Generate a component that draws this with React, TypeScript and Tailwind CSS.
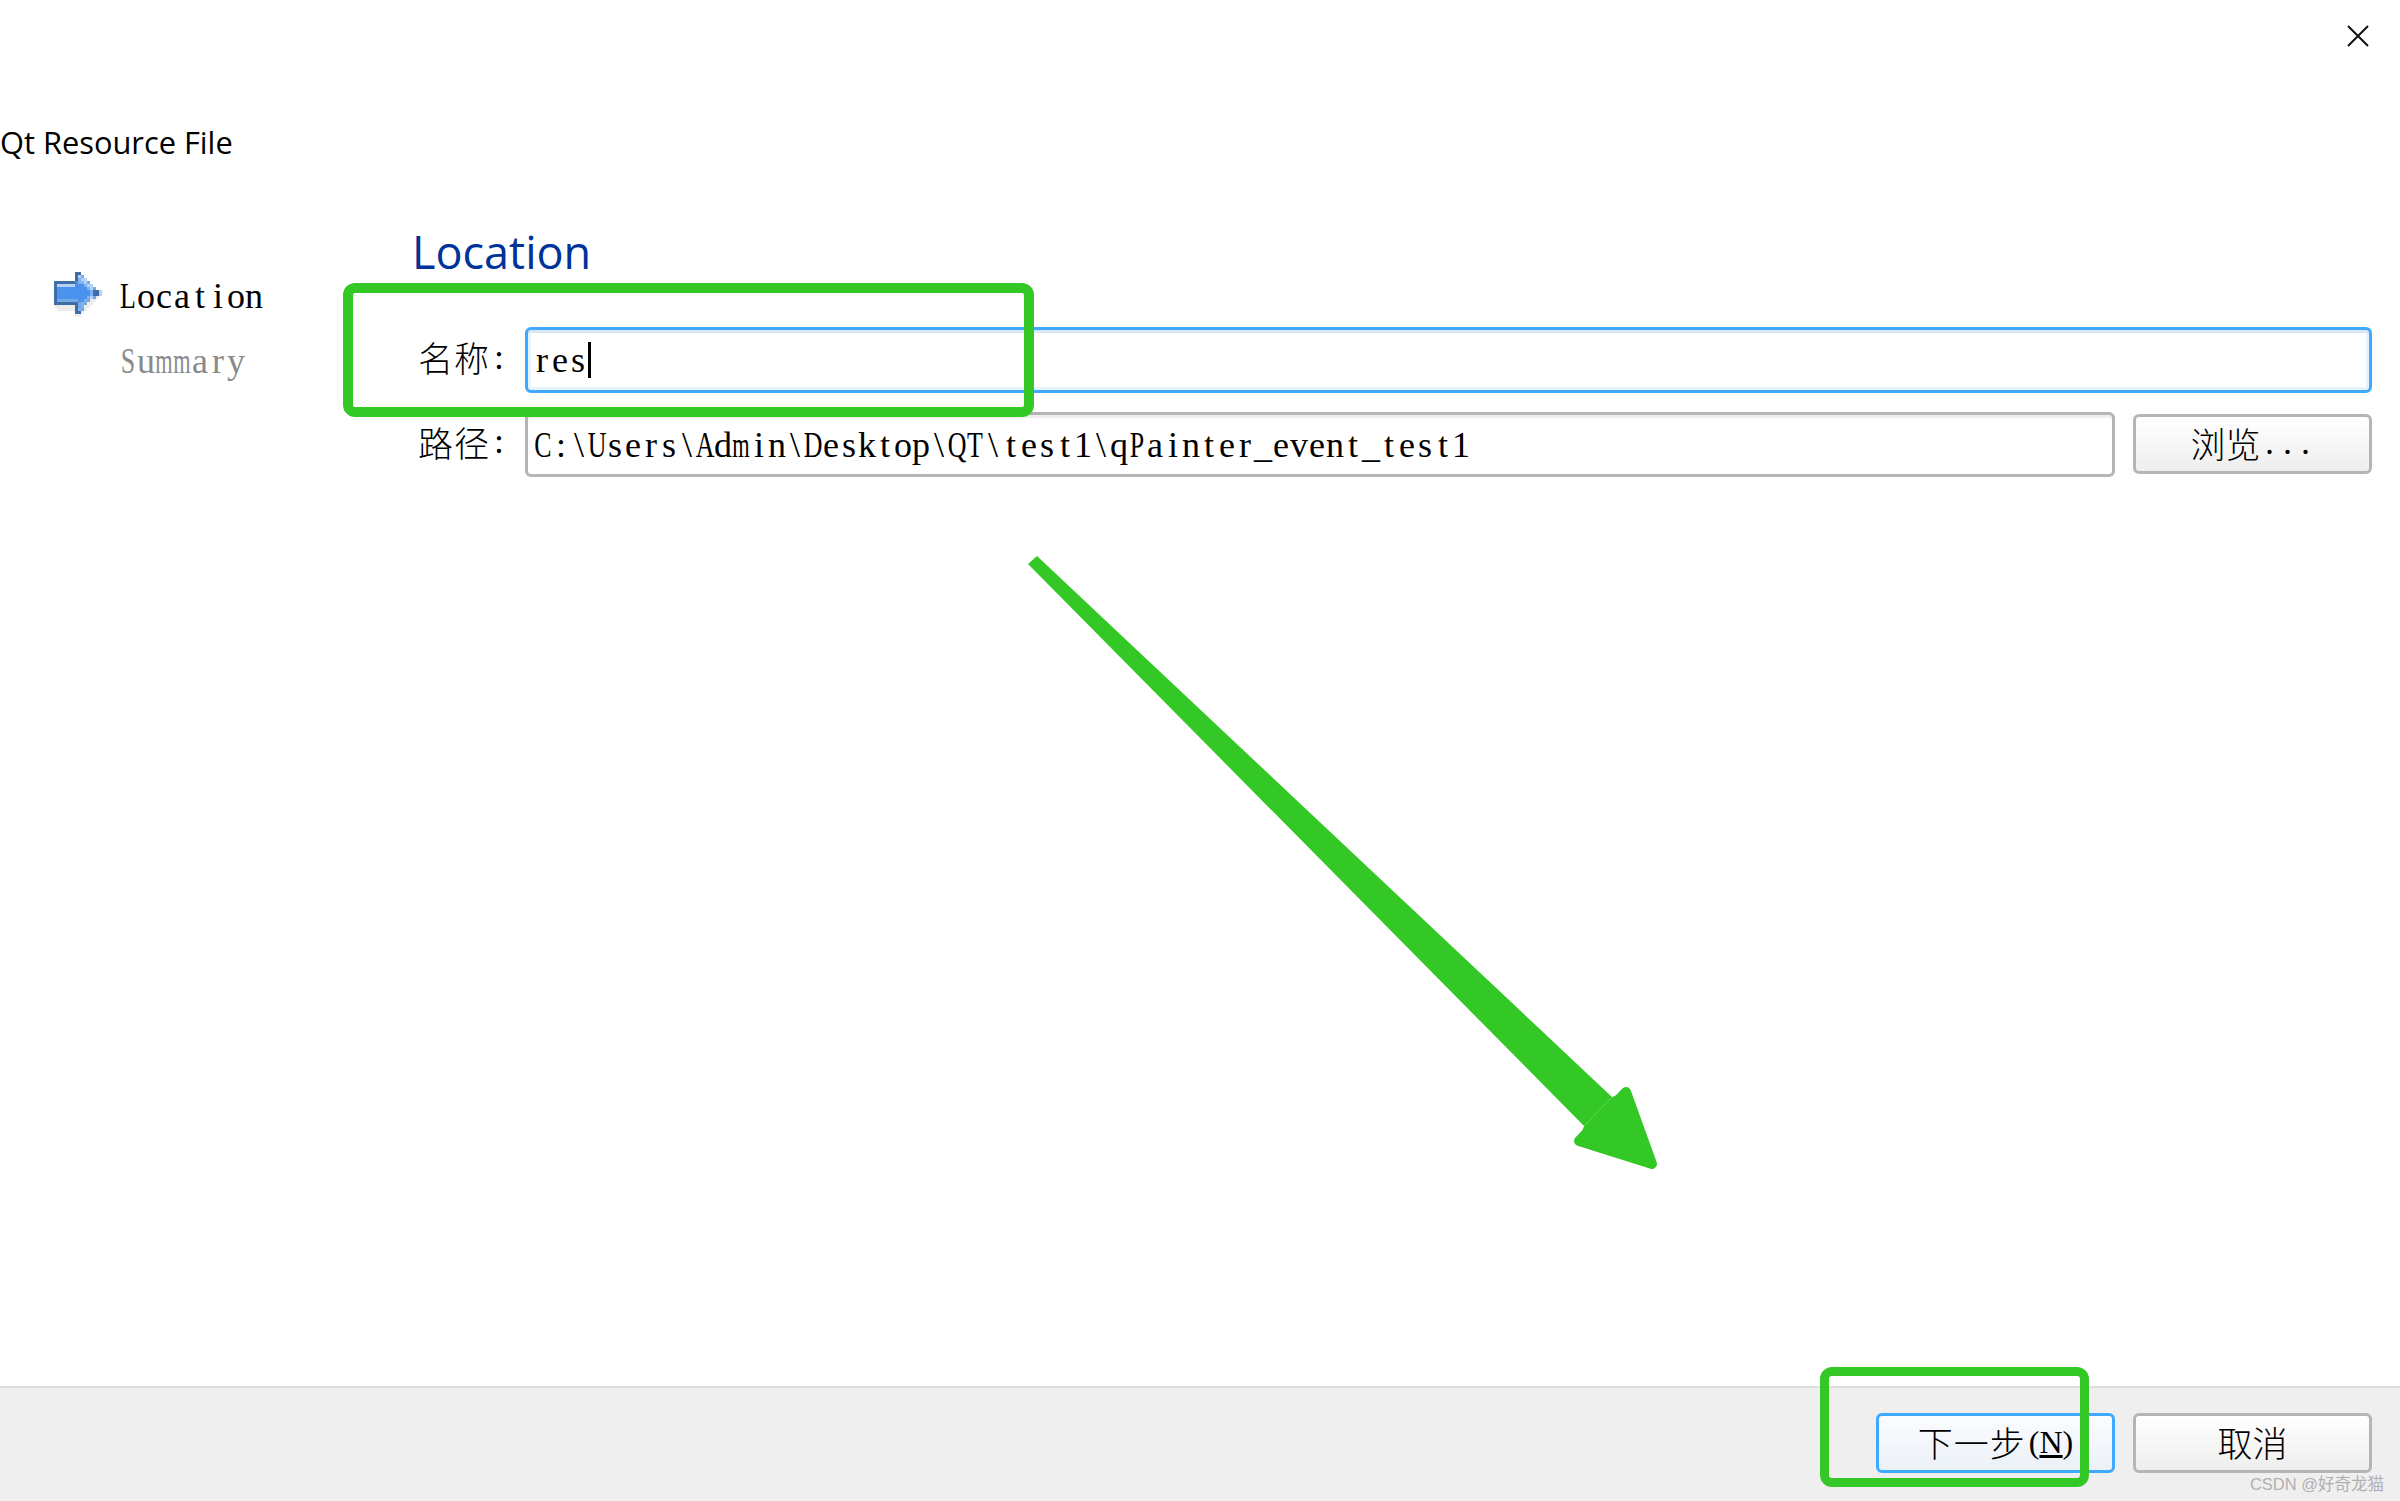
import { FC, ReactNode } from 'react';

const serifFont = "font-['Liberation_Serif',serif]";
const cjkFont = "font-['Noto_Sans_CJK_SC','Liberation_Serif',serif] font-light";

// 16x16 icon, one cell = 3px
const arrowPixels = [
  '.......dd.......',
  '.......dlm......',
  '.......dsll.....',
  'dddddddasslm....',
  'dllllllbbbsll...',
  'dbbbbbbbbbbslm..',
  'dbbbbbbbbbbbsddl',
  'dbbbbbbbbbbbsddl',
  'dbbbbbbbbbbslmg.',
  'dmmmmmmmbbsmgg..',
  'ddddddddmsmgg...',
  'gggggggdmsgg....',
  '.ggggggdsmg.....',
  '.......ddg......',
  '.......gg.......',
  '................',
];

const pixelColors: Record<string, string> = {
  d: '#3f6ea5',
  a: '#5c87b8',
  l: '#b4d2f5',
  s: '#7fb2f0',
  m: '#76a8e4',
  b: '#4a92ee',
  g: '#ececec',
};

const StepArrow: FC = () => (
  <svg width="48" height="48" viewBox="0 0 16 16" shapeRendering="crispEdges" className="shrink-0">
    {arrowPixels.map((row, y) =>
      row.split('').map((c, x) =>
        c === '.' ? null : <rect key={`${x}-${y}`} x={x} y={y} width="1" height="1" fill={pixelColors[c]} />,
      ),
    )}
  </svg>
);

// the dialog font is a half-width serif, so each letter sits in an 18px cell
const cellClass = (c: string) => {
  if ('mwMW'.includes(c)) return 'scale-x-[0.62]';
  if ('ADQUCLSPTN'.includes(c)) return 'scale-x-[0.72]';
  return '';
};

const HalfWidth: FC<{ text: string; className?: string }> = ({ text, className = '' }) => (
  <span className={`${serifFont} inline-flex text-[36px] leading-none ${className}`}>
    {text.split('').map((c, i) => (
      <span key={i} className={`flex w-[18px] justify-center ${cellClass(c)}`}>
        {c}
      </span>
    ))}
  </span>
);

const FieldLabel: FC<{ text: string }> = ({ text }) => (
  <div className="ml-[6px] flex w-[107px] items-center pb-[7px] text-black">
    <span className={`${cjkFont} text-[35px] leading-none tracking-[1px]`}>{text}</span>
    <HalfWidth text=":" />
  </div>
);

const DialogButton: FC<{ children: ReactNode; focused?: boolean }> = ({ children, focused }) => (
  <button
    className={`flex h-[60px] w-[239px] items-center justify-center rounded-[6px] border-[3px] bg-gradient-to-b pb-[3px] text-black ${
      focused ? 'border-[#3fa9ff] from-[#fbfcfe] to-[#ebf1f8]' : 'border-[#b5b5b5] from-[#ffffff] to-[#eeeeee]'
    }`}
  >
    {children}
  </button>
);

const App: FC = () => {
  return (
    <div className="relative flex h-[1501px] w-[2400px] flex-col overflow-hidden bg-white">
      <header className="flex h-[116px] justify-end pr-[31px] pt-[25px]">
        <svg width="22" height="22" viewBox="0 0 22 22" fill="none" stroke="#111" strokeWidth="2">
          <path d="M1 1l20 20M21 1L1 21" />
        </svg>
      </header>
      <h1 className="font-['Open_Sans','Noto_Sans',sans-serif] text-[30.8px] leading-[52px] text-black">Qt Resource File</h1>

      <main className="flex flex-1">
        <nav className="flex w-[412px] shrink-0 flex-col pl-[54px] pt-[104px]">
          <div className="flex h-[48px] items-center gap-[17px]">
            <StepArrow />
            <HalfWidth text="Location" className="text-black" />
          </div>
          <HalfWidth text="Summary" className="ml-[65px] mt-[23px] text-[#8a8a8a]" />
        </nav>

        <section className="flex flex-1 flex-col pr-[28px] pt-[54px]">
          <h2 className="h-[105px] font-['Open_Sans','Noto_Sans',sans-serif] text-[45px] leading-[60px] text-[#003399]">Location</h2>
          <div className="flex items-center">
            <FieldLabel text="名称" />
            <div className="flex h-[66px] flex-1 items-center rounded-[6px] border-[3px] border-[#3fa9ff] pl-[5px] text-black shadow-[inset_0_3px_0_#d8e6f5,inset_3px_0_0_#e5f3ff,inset_-3px_0_0_#e5f3ff,inset_0_-3px_0_#e5f3ff]">
              <HalfWidth text="res" />
              <span className="ml-[1px] h-[36px] w-[3px] bg-black" />
            </div>
          </div>
          <div className="mt-[19px] flex items-center">
            <FieldLabel text="路径" />
            <div className="flex h-[65px] w-[1590px] items-center rounded-[6px] border-[3px] border-[#b5b5b5] pl-[6px] text-black shadow-[inset_0_3px_0_#eeeeee]">
              <HalfWidth text={'C:\\Users\\Admin\\Desktop\\QT\\test1\\qPainter_event_test1'} />
            </div>
            <div className="ml-[18px] -mt-[2px]">
              <DialogButton>
                <span className={`${cjkFont} text-[35px] leading-none`}>浏览</span>
                <HalfWidth text="..." />
              </DialogButton>
            </div>
          </div>
        </section>
      </main>

      <footer className="flex h-[115px] items-start justify-end gap-[18px] border-t-2 border-[#dedede] bg-[#efefef] pr-[28px] pt-[25px]">
        <DialogButton focused>
          <span className={`${cjkFont} text-[35px] leading-none tracking-[1px]`}>下一步</span>
          <span className={`${serifFont} ml-[3px] text-[32px] leading-none`}>
            (<span className="underline">N</span>)
          </span>
        </DialogButton>
        <DialogButton>
          <span className={`${cjkFont} text-[35px] leading-none`}>取消</span>
        </DialogButton>
      </footer>

      {/* annotations drawn on top of the screenshot */}
      <div className="absolute left-[343px] top-[283px] h-[134px] w-[691px] rounded-[12px] border-[10px] border-[#33c825]" />
      <div className="absolute left-[1820px] top-[1367px] h-[120px] w-[269px] rounded-[12px] border-[9px] border-[#33c825]" />
      <svg className="absolute left-0 top-0" width="2400" height="1501" fill="#33c825">
        <path d="M1037 556L1612 1097L1584 1126L1028 564Z" />
        <path d="M1626 1092L1652 1164L1579 1141Z" stroke="#33c825" strokeWidth="10" strokeLinejoin="round" />
        <path d="M1626 1092L1652 1164L1579 1141L1584 1126L1612 1097Z" />
      </svg>
      <span className="absolute right-[16px] top-[1474px] font-['Liberation_Sans','Noto_Sans_CJK_SC',sans-serif] text-[16.5px] leading-[20px] text-[#b0b0b0]">
        CSDN @好奇龙猫
      </span>
    </div>
  );
};

export default App;
